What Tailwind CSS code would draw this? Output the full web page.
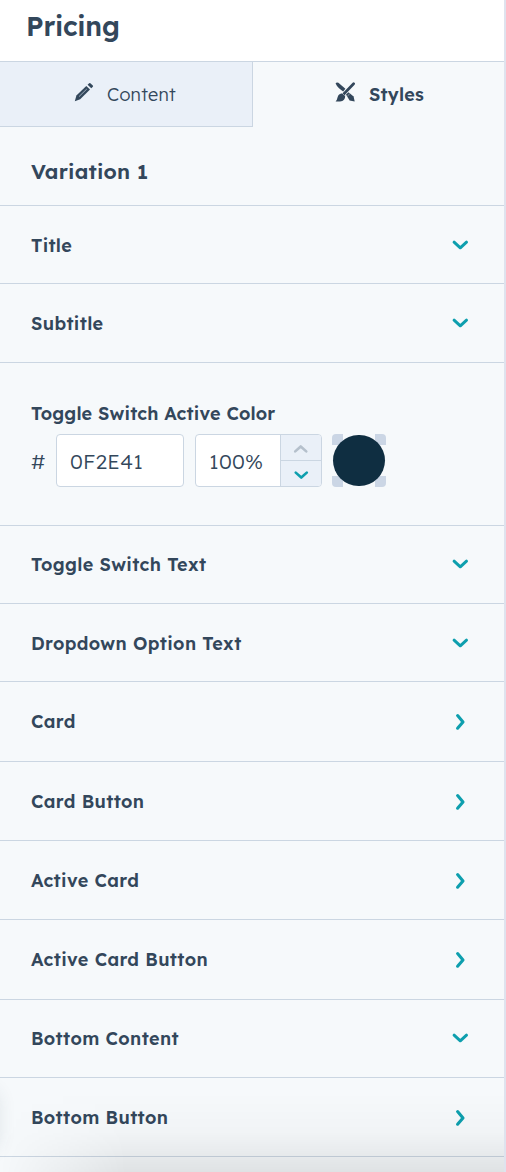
<!DOCTYPE html>
<html lang="en">

<head>
    <meta charset="UTF-8">
    <meta name="viewport" content="width=device-width, initial-scale=1.0">
    <title>Pricing</title>
    <script src="https://cdn.jsdelivr.net/npm/@tailwindcss/browser@4"></script>
</head>

<body class="bg-[#f6f9fb] font-['Lexend_Deca',Inter,sans-serif] text-[#33475b]">
    <!-- icon sprites -->
    <svg class="hidden">
        <symbol id="down" viewBox="0 0 18 18">
            <path d="M3.1 5.2 9.3 10.8 15.5 5.2" fill="none" stroke="currentColor" stroke-width="3" stroke-linecap="round" stroke-linejoin="round" />
        </symbol>
        <symbol id="right" viewBox="0 0 18 18">
            <path d="M6.6 2.6 12 8.9 6.6 15.2" fill="none" stroke="currentColor" stroke-width="3.1" stroke-linecap="round" stroke-linejoin="round" />
        </symbol>
    </svg>

    <div class="relative flex h-[1172px] w-[506px] flex-col overflow-hidden border-r-2 border-[#dfe3ee]">
        <header class="h-[62px] shrink-0 border-b border-[#cbd6e2] bg-white pl-[26px]">
            <h1 class="pt-1.5 text-[27px] leading-10 font-semibold tracking-[-0.25px]">Pricing</h1>
        </header>

        <nav class="flex h-[65px] shrink-0">
            <div class="flex w-[253px] items-center border-r border-b border-[#cbd6e2] bg-[#eaf0f8] pl-[74px]">
                <svg class="mb-1 h-5 w-5" viewBox="0 0 20 20" fill="currentColor">
                    <path d="M.8 19.2 2.4 13.4 12.3 4 16 7.6 6.2 17.2Z" />
                    <path d="M13.6 2.8 15.2 1.2Q15.8.7 16.4 1.2L18.8 3.5Q19.4 4.2 18.8 4.8L17.3 6.3Z" />
                    <path d="M5 14.6 12.8 7" stroke="#9eacbc" stroke-width="1" />
                </svg>
                <span class="ml-[13px] pt-0.5 text-lg tracking-[0.25px] font-light">Content</span>
            </div>
            <div class="flex flex-1 items-center pl-[82px]">
                <svg class="mb-1.5 h-5 w-5" viewBox="0 0 20 20" fill="currentColor">
                    <path d="M.6 1.4Q1.4-.2 3.4.7L10.4 6.7 8.2 9.4Q2.4 5.6.6 1.4Z" />
                    <path d="M11 12.4 13.5 10.2 18.6 14.6 19.7 19.4 14.6 18.4Z" />
                    <path d="M18.6 1.8 8.8 12" stroke="currentColor" stroke-width="2.7" stroke-linecap="round" />
                    <path d="M10.2 13.5Q10.4 19.2 5 19.5H.6Q2.2 17.9 2.5 15.6 3.3 11.5 7.4 11.2Z" />
                    <path d="M7 11 9.8 13.8M12.5 13.9 14.7 11.9" stroke="#f6f9fb" stroke-width=".5" />
                </svg>
                <span class="ml-[14px] text-lg font-semibold tracking-[0.2px]">Styles</span>
            </div>
        </nav>

        <div class="flex h-[79px] shrink-0 items-center border-b border-[#cbd6e2] pt-3 pl-[31px]">
            <h2 class="text-[21px] font-semibold tracking-[0.16px]">Variation 1</h2>
        </div>

        <div class="flex h-[78px] shrink-0 items-center justify-between border-b border-[#cbd6e2] pt-0.5 pr-[35px] pl-[31px] text-lg font-semibold">
            <span class="tracking-[0.3px]">Title</span>
            <svg class="h-[18px] w-[18px] text-[#0e9fae]"><use href="#down" /></svg>
        </div>
        <div class="flex h-[79px] shrink-0 items-center justify-between border-b border-[#cbd6e2] pt-0.5 pr-[35px] pl-[31px] text-lg font-semibold">
            <span class="tracking-[0.35px]">Subtitle</span>
            <svg class="h-[18px] w-[18px] text-[#0e9fae]"><use href="#down" /></svg>
        </div>

        <!-- color picker -->
        <div class="h-[163px] shrink-0 border-b border-[#cbd6e2] pt-[37px] pl-[31px]">
            <div class="text-lg leading-7 font-semibold tracking-[0.16px]">Toggle Switch Active Color</div>
            <div class="mt-1.5 flex h-[53px] items-center text-[21px]">
                <span class="w-[25px] pt-0.5 text-[21px] font-light">#</span>
                <div class="flex h-full w-32 items-center rounded border border-[#cbd6e2] bg-white pt-0.5 pl-[13px] font-light"><span class="tracking-[0.15px]">0F2E41</span></div>
                <div class="ml-[11px] flex h-full w-[127px] overflow-hidden rounded border border-[#cbd6e2] bg-white">
                    <div class="flex w-[84px] items-center pt-0.5 pl-[13px] font-light"><span class="tracking-[0.3px]">100%</span></div>
                    <div class="flex flex-1 flex-col border-l border-[#cbd6e2] bg-[#eaf0f8]">
                        <div class="flex h-[26px] items-center justify-center border-b border-[#cbd6e2] text-[#b5c0cc]">
                            <svg class="h-4 w-4 rotate-180"><use href="#down" /></svg>
                        </div>
                        <div class="flex flex-1 items-center justify-center pt-1 text-[#0e9fae]">
                            <svg class="h-4 w-4"><use href="#down" /></svg>
                        </div>
                    </div>
                </div>
                <div class="ml-2.5 grid h-[53px] w-[54px] grid-cols-[11px_1fr_11px] grid-rows-[11px_1fr_11px] overflow-hidden rounded">
                    <span class="col-start-1 row-start-1 bg-[#cbd6e5]"></span>
                    <span class="col-start-3 row-start-1 bg-[#cbd6e5]"></span>
                    <span class="col-start-1 row-start-3 bg-[#cbd6e5]"></span>
                    <span class="col-start-3 row-start-3 bg-[#cbd6e5]"></span>
                    <span class="col-span-3 col-start-1 row-span-3 row-start-1 m-px rounded-full bg-[#0f2e41]"></span>
                </div>
            </div>
        </div>

        <div class="flex h-[78px] shrink-0 items-center justify-between border-b border-[#cbd6e2] pr-[35px] pl-[31px] text-lg font-semibold">
            <span class="tracking-[0.37px]">Toggle Switch Text</span>
            <svg class="h-[18px] w-[18px] text-[#0e9fae]"><use href="#down" /></svg>
        </div>
        <div class="flex h-[78px] shrink-0 items-center justify-between border-b border-[#cbd6e2] pt-0.5 pr-[35px] pl-[31px] text-lg font-semibold">
            <span class="tracking-[0.37px]">Dropdown Option Text</span>
            <svg class="h-[18px] w-[18px] text-[#0e9fae]"><use href="#down" /></svg>
        </div>
        <div class="flex h-20 shrink-0 items-center justify-between border-b border-[#cbd6e2] pr-[35px] pl-[31px] text-lg font-semibold">
            <span class="tracking-[0.37px]">Card</span>
            <svg class="h-[18px] w-[18px] text-[#0e9fae]"><use href="#right" /></svg>
        </div>
        <div class="flex h-[79px] shrink-0 items-center justify-between border-b border-[#cbd6e2] pt-0.5 pr-[35px] pl-[31px] text-lg font-semibold">
            <span class="tracking-[0.37px]">Card Button</span>
            <svg class="h-[18px] w-[18px] text-[#0e9fae]"><use href="#right" /></svg>
        </div>
        <div class="flex h-[79px] shrink-0 items-center justify-between border-b border-[#cbd6e2] pt-0.5 pr-[35px] pl-[31px] text-lg font-semibold">
            <span class="tracking-[0.35px]">Active Card</span>
            <svg class="h-[18px] w-[18px] text-[#0e9fae]"><use href="#right" /></svg>
        </div>
        <div class="flex h-20 shrink-0 items-center justify-between border-b border-[#cbd6e2] pr-[35px] pl-[31px] text-lg font-semibold">
            <span class="tracking-[0.37px]">Active Card Button</span>
            <svg class="h-[18px] w-[18px] text-[#0e9fae]"><use href="#right" /></svg>
        </div>
        <div class="flex h-[78px] shrink-0 items-center justify-between border-b border-[#cbd6e2] pr-[35px] pl-[31px] text-lg font-semibold">
            <span class="tracking-[0.37px]">Bottom Content</span>
            <svg class="h-[18px] w-[18px] text-[#0e9fae]"><use href="#down" /></svg>
        </div>
        <div class="flex h-[79px] shrink-0 items-center justify-between border-b border-[#cbd6e2] pt-0.5 pr-[35px] pl-[31px] text-lg font-semibold">
            <span class="tracking-[0.37px]">Bottom Button</span>
            <svg class="h-[18px] w-[18px] text-[#0e9fae]"><use href="#right" /></svg>
        </div>

        <!-- shadows of the floating footer and the side handle -->
        <div class="pointer-events-none absolute bottom-0 left-0 h-20 w-[506px] bg-linear-to-b from-transparent via-black/2 to-black/9 mask-l-from-75% mask-l-to-100%"></div>
        <div class="pointer-events-none absolute -left-6 bottom-6 h-14 w-5 rounded-full shadow-[0_0_18px_2px_#33475b20]"></div>
    </div>
</body>

</html>
